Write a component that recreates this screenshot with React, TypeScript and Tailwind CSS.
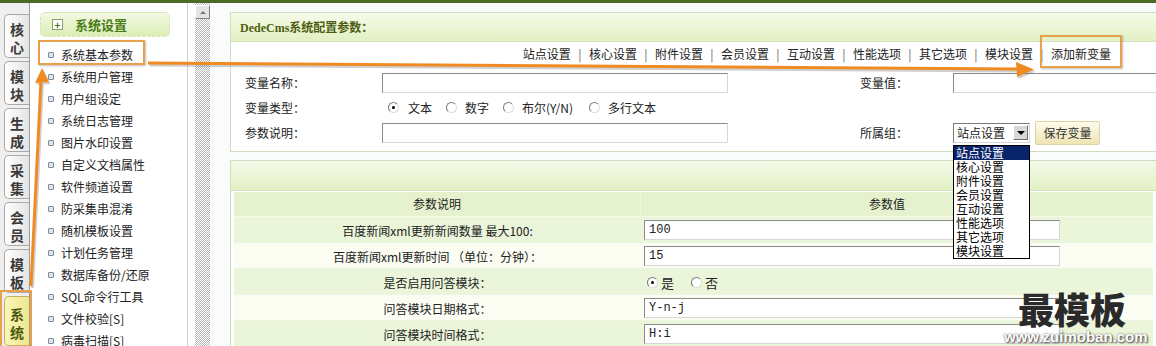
import React from "react";

const tabs = ["核心", "模块", "生成", "采集", "会员", "模板"];
const menu = [
  "系统基本参数",
  "系统用户管理",
  "用户组设定",
  "系统日志管理",
  "图片水印设置",
  "自定义文档属性",
  "软件频道设置",
  "防采集串混淆",
  "随机模板设置",
  "计划任务管理",
  "数据库备份/还原",
  "SQL命令行工具",
  "文件校验[S]",
  "病毒扫描[S]",
];
const links = ["站点设置", "核心设置", "附件设置", "会员设置", "互动设置", "性能选项", "其它选项", "模块设置", "添加新变量"];
const groups = ["站点设置", "核心设置", "附件设置", "会员设置", "互动设置", "性能选项", "其它选项", "模块设置"];

function Radio({ checked }: { checked?: boolean }) {
  return (
    <span className="relative inline-block w-[11px] h-[11px] shrink-0 rounded-full border border-t-[#7a7a7a] border-l-[#7a7a7a] border-r-[#dcdcdc] border-b-[#dcdcdc] bg-white">
      {checked && <span className="absolute left-[3px] top-[3px] w-[3px] h-[3px] rounded-full bg-black" />}
    </span>
  );
}

function Field({ className, children }: { className?: string; children?: React.ReactNode }) {
  return (
    <div
      className={
        "h-[20px] border border-t-[#8a8a8a] border-l-[#8a8a8a] border-r-[#d6d6d6] border-b-[#d6d6d6] bg-white flex items-center pl-[4px] text-[12px] font-['Liberation_Mono','Noto_Sans_CJK_SC',monospace] " +
        (className ?? "")
      }
    >
      {children}
    </div>
  );
}

const rows: { label: string; value: string; green: boolean }[] = [
  { label: "百度新闻xml更新新闻数量 最大100:", value: "100", green: true },
  { label: "百度新闻xml更新时间 （单位：分钟）：", value: "15", green: false },
  { label: "是否启用问答模块：", value: "radio", green: true },
  { label: "问答模块日期格式：", value: "Y-n-j", green: false },
  { label: "问答模块时间格式：", value: "H:i", green: true },
];

export default function App() {
  return (
    <div className="relative w-[1156px] h-[346px] overflow-hidden bg-white text-[12px] leading-[16px] text-[#222] font-['Noto_Sans_CJK_SC','Liberation_Sans',sans-serif]">
      {/* top bar */}
      <div className="h-[3px] bg-[#4b6a26]" />

      <div className="flex h-[343px]">
        {/* left vertical tabs */}
        <div className="w-[30px] shrink-0 bg-[#efefef] border-r border-[#9c9c9c] flex flex-col pt-[11px] gap-[3px]">
          {tabs.map((t) => (
            <div
              key={t}
              className="ml-[4px] w-[25px] h-[44px] shrink-0 rounded-l-[5px] border border-r-0 border-[#a9a9a9] bg-gradient-to-r from-white to-[#e4e4e4] flex flex-col items-center justify-center pt-[4px] text-[14px] leading-[18px] font-bold text-[#3a3a3a]"
            >
              <span>{t[0]}</span>
              <span>{t[1]}</span>
            </div>
          ))}
          <div className="ml-[4px] w-[25px] h-[50px] shrink-0 rounded-l-[5px] border border-r-0 border-[#c9b060] bg-gradient-to-r from-[#fbf6b8] to-[#efe58e] flex flex-col items-center justify-center pt-[4px] text-[14px] leading-[18px] font-bold text-[#4a5a10]">
            <span>系</span>
            <span>统</span>
          </div>
        </div>

        {/* menu */}
        <div className="w-[158px] shrink-0 border-r border-[#cfcfcf] bg-white pt-[9px]">
          <div className="ml-[10px] w-[130px] h-[25px] rounded-[5px] border border-dashed border-[#d5e6b5] bg-gradient-to-b from-[#f3f9e3] to-[#dcedb6] flex items-center pl-[11px]">
            <span className="w-[11px] h-[11px] border border-[#8aa46a] bg-white flex items-center justify-center text-[10px] leading-[10px] text-[#4c7a1a] font-bold">
              +
            </span>
            <span className="ml-[12px] text-[13px] font-bold text-[#4a7c18]">系统设置</span>
          </div>
          <div className="mt-[7px] flex flex-col">
            {menu.map((m) => (
              <div key={m} className="h-[22px] flex items-center pl-[18px] text-[12px] text-[#222]">
                <span className="w-[6px] h-[6px] rounded-[1px] border border-[#7d8a9a] bg-[#dfe6ee]" />
                <span className="ml-[7px]">{m}</span>
              </div>
            ))}
          </div>
        </div>

        {/* scroll strip */}
        <div className="w-[42px] shrink-0 flex">
          <div className="w-[7px] bg-white" />
          <div className="w-[15px] bg-[repeating-conic-gradient(#b9b9b9_0%_25%,#ffffff_0%_50%)] bg-[length:2px_2px] pt-[2px]">
            <div className="h-[14px] border border-t-white border-l-white border-r-[#808080] border-b-[#808080] bg-[#e4e4e4] flex items-center justify-center">
              <span className="w-0 h-0 border-l-[3px] border-r-[3px] border-b-[3px] border-l-transparent border-r-transparent border-b-[#777]" />
            </div>
          </div>
          <div className="flex-1 bg-[#fafcfb]" />
        </div>

        {/* main */}
        <div className="w-[926px] min-w-0 shrink-0 overflow-hidden pt-[9px] bg-[#fafcfb]">
          {/* panel 1 */}
          <div className="border border-r-0 border-[#cfdcbf] bg-white h-[140px]">
            <div className="h-[29px] border-b border-[#d3e2bc] bg-gradient-to-b from-[#f6fbe9] to-[#e2f0c2] flex items-center pl-[9px]">
              <span className="font-bold text-[12px] text-[#4d5e12] font-['Liberation_Serif','Noto_Sans_CJK_SC',serif]">
                DedeCms<span className="font-['Noto_Sans_CJK_SC',sans-serif]">系统配置参数：</span>
              </span>
            </div>
            <div className="h-[23px] flex items-center justify-end pr-[45px]">
              {links.map((l, i) => (
                <React.Fragment key={l}>
                  {i > 0 && <span className="w-[18px] text-center text-[#666]">|</span>}
                  <span>{l}</span>
                </React.Fragment>
              ))}
            </div>
            <div className="pt-[5px] pl-[14px] grid grid-cols-[137px_478px_93px_200px] auto-rows-[25px] items-center">
              <span>变量名称：</span>
              <Field className="w-[346px]" />
              <span>变量值：</span>
              <Field className="w-[220px]" />

              <span>变量类型：</span>
              <div className="col-span-3 flex items-center pl-[6px]">
                <Radio checked />
                <span className="ml-[9px]">文本</span>
                <span className="ml-[14px] flex"><Radio /></span>
                <span className="ml-[8px]">数字</span>
                <span className="ml-[14px] flex"><Radio /></span>
                <span className="ml-[8px]">布尔(Y/N)</span>
                <span className="ml-[16px] flex"><Radio /></span>
                <span className="ml-[8px]">多行文本</span>
              </div>

              <span>参数说明：</span>
              <Field className="w-[346px]" />
              <span>所属组：</span>
              <div className="flex items-center">
                <div className="w-[77px] h-[20px] border border-t-[#7a7a7a] border-l-[#7a7a7a] border-r-[#d6d6d6] border-b-[#d6d6d6] bg-white flex items-center justify-between pl-[3px] pr-[1px]">
                  <span>站点设置</span>
                  <span className="w-[15px] h-[15px] border border-t-white border-l-white border-r-[#707070] border-b-[#707070] bg-[#d8d8d8] flex items-center justify-center">
                    <span className="w-0 h-0 border-l-[4px] border-r-[4px] border-t-[4px] border-l-transparent border-r-transparent border-t-black" />
                  </span>
                </div>
                <div className="ml-[5px] w-[65px] h-[24px] shrink-0 rounded-[2px] border border-[#ddd2a2] bg-gradient-to-b from-[#fefcec] to-[#eee4b4] flex items-center justify-center text-[#333]">
                  保存变量
                </div>
              </div>
            </div>
          </div>

          {/* panel 2 */}
          <div className="mt-[8px] border border-r-0 border-[#cfdcbf] bg-white h-[200px]">
            <div className="h-[30px] border-b border-[#d3e2bc] bg-gradient-to-b from-[#f4faea] to-[#e3f1c4]" />
            <div className="px-[3px] pt-[1px]">
              <div className="h-[25px] flex bg-[#e6f2cd] border-b border-[#f4f9ea]">
                <div className="w-[407px] flex items-center justify-center border-r border-[#f2f8e6]">参数说明</div>
                <div className="flex-1 flex items-center justify-center pr-[20px]">参数值</div>
              </div>
              {rows.map((r) => (
                <div
                  key={r.label}
                  className={"h-[26px] flex border-b border-[#eef4e2] " + (r.green ? "bg-[#ebf5d9]" : "bg-[#fbfdf3]")}
                >
                  <div className="w-[407px] flex items-center justify-center pt-[2px]">{r.label}</div>
                  <div className="flex-1 flex items-center pl-[3px]">
                    {r.value === "radio" ? (
                      <div className="flex items-center pl-[3px] pt-[2px]">
                        <Radio checked />
                        <span className="ml-[3px] text-[13px]">是</span>
                        <span className="ml-[17px] flex"><Radio /></span>
                        <span className="ml-[3px] text-[13px]">否</span>
                      </div>
                    ) : (
                      <Field className="w-[416px]">{r.value}</Field>
                    )}
                  </div>
                </div>
              ))}
            </div>
          </div>
        </div>
      </div>

      {/* open dropdown list */}
      <div className="absolute left-[953px] top-[145px] w-[77px] border border-black bg-white text-[12px] leading-[14px]">
        {groups.map((g, i) => (
          <div key={g} className={"h-[14px] pl-[2px] " + (i === 0 ? "bg-[#0a246a] text-white" : "text-black")}>
            {g}
          </div>
        ))}
      </div>

      {/* orange highlight boxes */}
      <div className="absolute left-[38px] top-[40px] w-[107px] h-[25px] border-2 border-[#e9a04a] shadow-[1px_1px_2px_rgba(0,0,0,0.25)]" />
      <div className="absolute left-[1040px] top-[35px] w-[82px] h-[33px] border-2 border-[#e9a04a] shadow-[1px_1px_2px_rgba(0,0,0,0.25)]" />
      <div className="absolute left-[0px] top-[290px] w-[32px] h-[60px] border-2 border-[#e9a04a]" />

      {/* arrows */}
      <svg className="absolute left-0 top-0 pointer-events-none" width="1156" height="346" viewBox="0 0 1156 346">
        <g opacity="0.35" transform="translate(1.5,2)">
          <line x1="148" y1="63" x2="1020" y2="69" stroke="#777" strokeWidth="3" />
          <polygon points="1034,69.5 1016,62 1017,77" fill="#777" />
          <line x1="31" y1="286" x2="41" y2="80" stroke="#777" strokeWidth="3" />
          <polygon points="42,68 35,83 49,82" fill="#777" />
        </g>
        <line x1="148" y1="63" x2="1020" y2="69" stroke="#f08a22" strokeWidth="3" />
        <polygon points="1034,69.5 1016,62 1017,77" fill="#f08a22" />
        <line x1="31" y1="286" x2="41" y2="80" stroke="#f08a22" strokeWidth="3" />
        <polygon points="42,68 35,83 49,82" fill="#f08a22" />
      </svg>

      {/* watermark */}
      <div className="absolute left-[1018px] top-[289px] text-[36px] leading-[38px] font-black text-[#2a2a2a] font-['Noto_Sans_CJK_SC',sans-serif]">
        最模板
      </div>
      <div className="absolute left-[1004px] top-[328px] text-[15px] leading-[17px] font-bold text-white font-['Liberation_Sans',sans-serif] [text-shadow:1px_1px_2px_#444,0_0_2px_#666]">
        www.zuimoban.com
      </div>
    </div>
  );
}
